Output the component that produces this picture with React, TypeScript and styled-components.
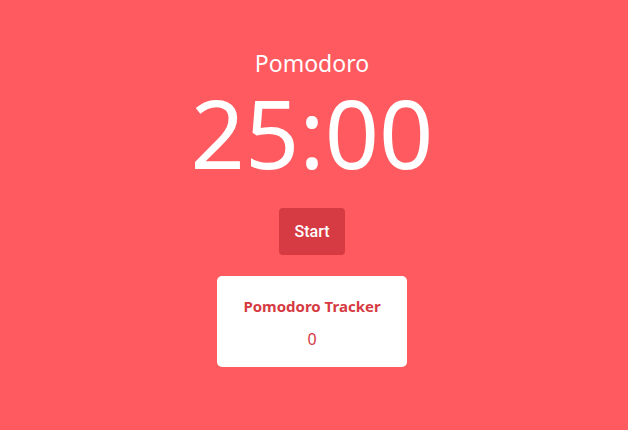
import React, { useState } from "react";
import styled, { createGlobalStyle } from "styled-components";

const GlobalStyle = createGlobalStyle`
  html, body {
    margin: 0;
    padding: 0;
    background-color: #ff5a5f;
  }
  body {
    font-family: "Noto Sans", "Open Sans", sans-serif;
  }
`;

const Container = styled.div`
  display: flex;
  flex-direction: column;
  align-items: center;
  height: 430px;
  padding: 46px 4px 0 0;
  box-sizing: border-box;
  color: white;
`;

const Mode = styled.div`
  font-size: 23px;
  line-height: 34px;
`;

const Clock = styled.div`
  font-size: 95px;
  line-height: 96px;
  margin-top: 4px;
`;

const StartButton = styled.button`
  margin-top: 28px;
  width: 66px;
  height: 47px;
  border: none;
  border-radius: 4px;
  background-color: #d63a42;
  color: white;
  font-family: Roboto, "Liberation Sans", sans-serif;
  font-size: 16px;
  font-weight: 500;
  cursor: pointer;
`;

const Tracker = styled.div`
  margin-top: 21px;
  width: 190px;
  height: 91px;
  box-sizing: border-box;
  background-color: white;
  border-radius: 5px;
  color: #d63a42;
  display: flex;
  flex-direction: column;
  align-items: center;
  padding-top: 19px;
`;

const TrackerTitle = styled.div`
  font-size: 15px;
  font-weight: bold;
  line-height: 22px;
`;

const Count = styled.div`
  font-size: 16px;
  line-height: 22px;
  margin-top: 11px;
`;

export default function App() {
  const [count] = useState(0);
  return (
    <>
      <GlobalStyle />
      <Container>
        <Mode>Pomodoro</Mode>
        <Clock>25:00</Clock>
        <StartButton>Start</StartButton>
        <Tracker>
          <TrackerTitle>Pomodoro Tracker</TrackerTitle>
          <Count>{count}</Count>
        </Tracker>
      </Container>
    </>
  );
}
